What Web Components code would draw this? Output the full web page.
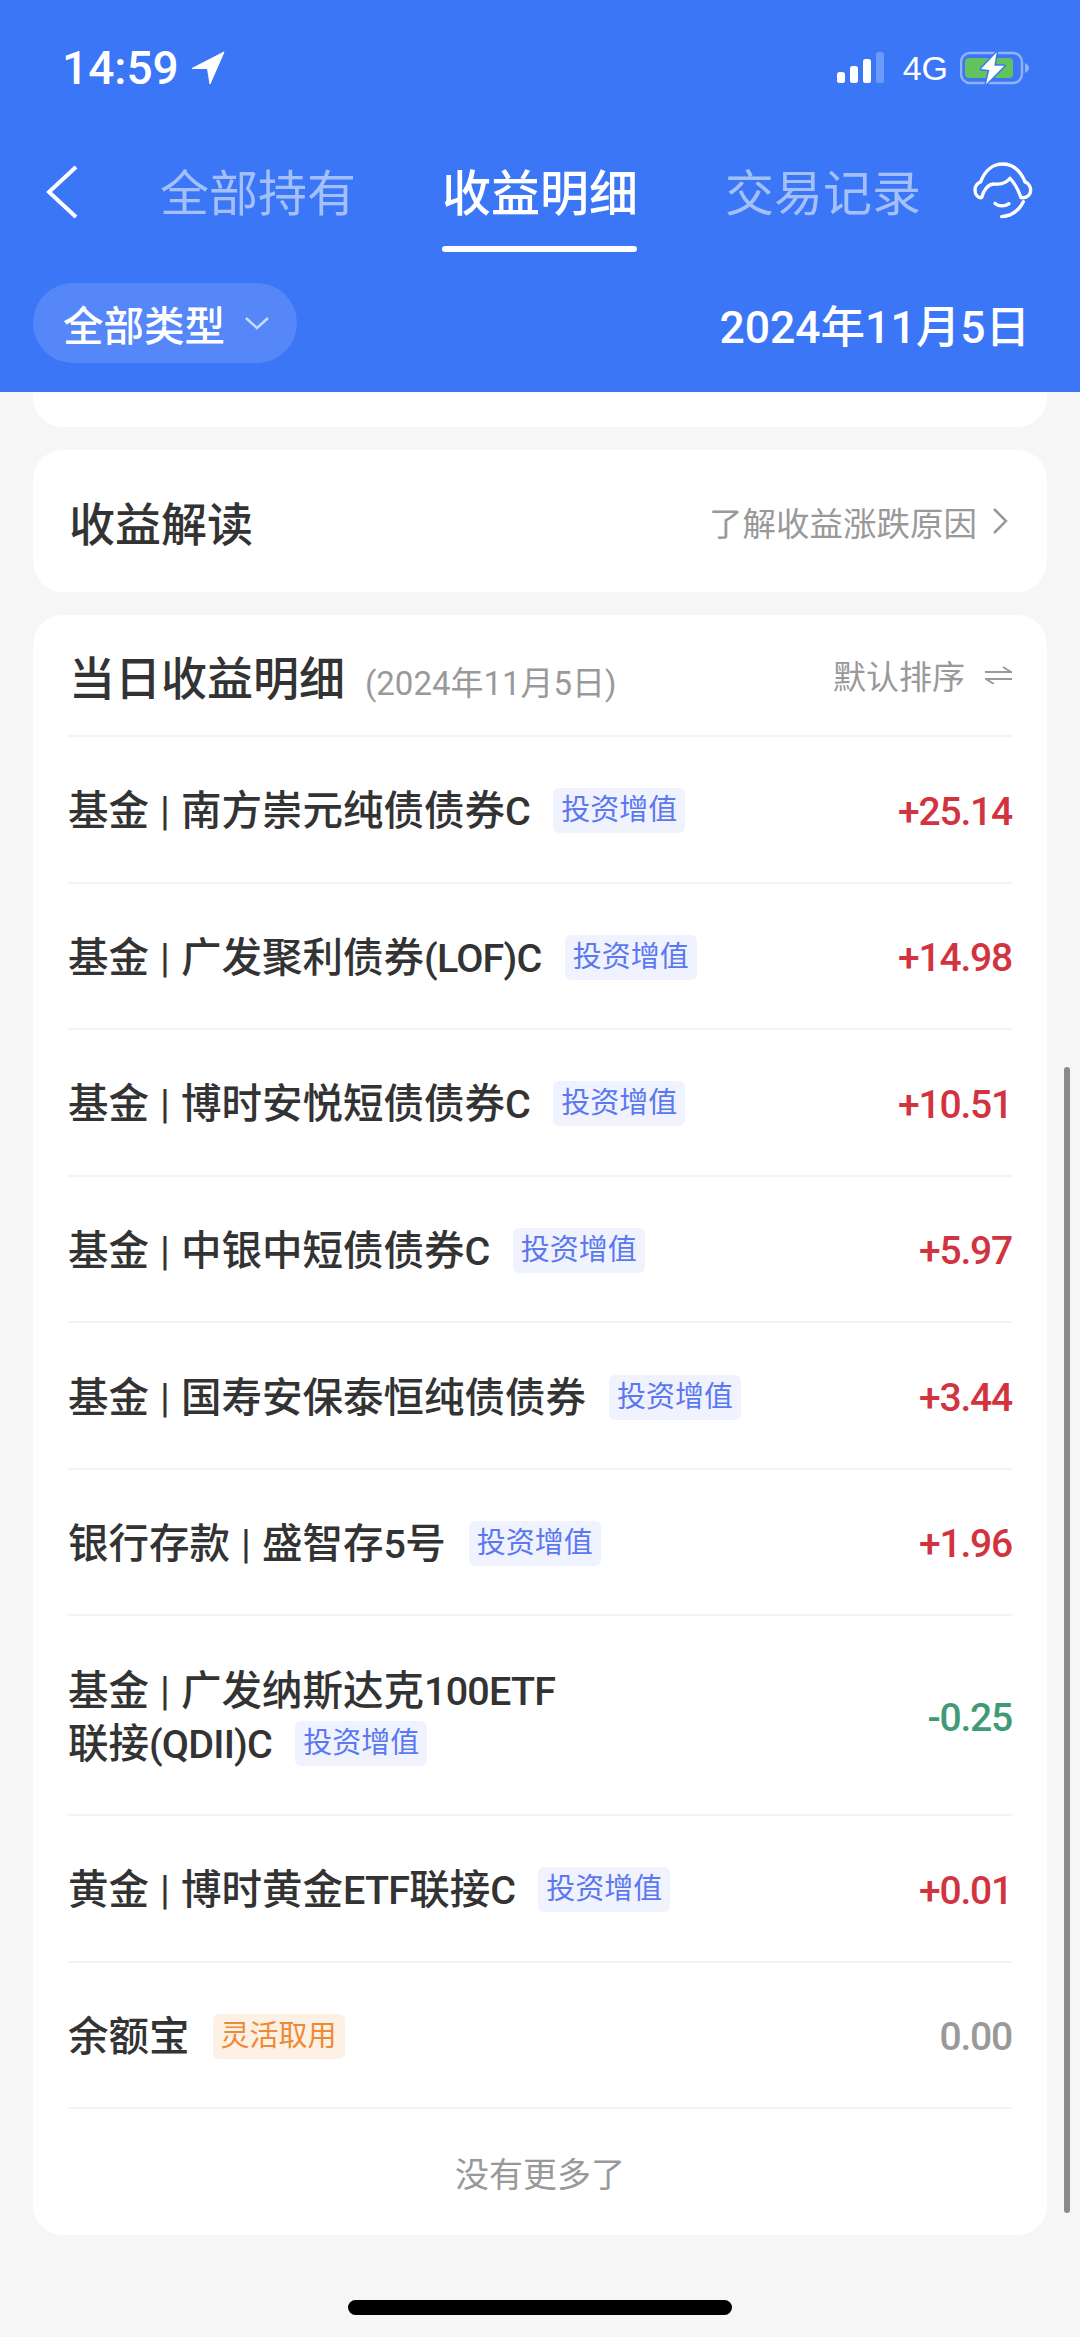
<!DOCTYPE html>
<html lang="zh">
<head>
<meta charset="utf-8">
<style>
  html, body { margin: 0; padding: 0; }
  body {
    width: 1080px;
    height: 2337px;
    overflow: hidden;
    background: #f6f6f6;
    font-family: Roboto, "Noto Sans CJK SC", sans-serif;
    position: relative;
  }
</style>
</head>
<body>
<app-header></app-header>
<stub-card></stub-card>
<insight-card></insight-card>
<detail-card>
  <income-row name="基金 | 南方崇元纯债债券C" amount="+25.14"></income-row>
  <income-row name="基金 | 广发聚利债券(LOF)C" amount="+14.98"></income-row>
  <income-row name="基金 | 博时安悦短债债券C" amount="+10.51"></income-row>
  <income-row name="基金 | 中银中短债债券C" amount="+5.97"></income-row>
  <income-row name="基金 | 国寿安保泰恒纯债债券" amount="+3.44"></income-row>
  <income-row name="银行存款 | 盛智存5号" amount="+1.96"></income-row>
  <income-row name="基金 | 广发纳斯达克100ETF 联接(QDII)C" amount="-0.25" tall></income-row>
  <income-row name="黄金 | 博时黄金ETF联接C" amount="+0.01"></income-row>
  <income-row name="余额宝" amount="0.00" tag="灵活取用" tone="orange"></income-row>
</detail-card>
<page-chrome></page-chrome>

<script>
(function () {
const CJK = 'Roboto, "Noto Sans CJK SC", sans-serif';

class AppHeader extends HTMLElement {
  constructor() {
    super();
    this.attachShadow({ mode: 'open' });
    this.shadowRoot.innerHTML = `
      <style>
        :host { display: block; height: 392px; background: #3b76f7; color: #fff; font-family: ${CJK}; }
        .status { height: 136px; display: flex; align-items: center; padding: 0 48px 0 62px; box-sizing: border-box; }
        .time { font: 500 46px/1 Roboto, sans-serif; }
        .loc { margin-left: 12px; }
        .spacer { flex: 1; }
        .net { font: 34px/1 "Liberation Sans", sans-serif; margin: 0 12px 0 19px; }
        .nav { height: 147px; display: grid; grid-template-columns: 160px 193px 89px 195px 88px 192px 1fr; align-items: start; }
        .back { padding: 29px 0 0 46px; }
        .tab { font-size: 49px; line-height: 48px; padding-top: 35px; color: #a4c0fb; white-space: nowrap; }
        .tab.on { color: #fff; font-weight: 500; position: relative; height: 116px; box-sizing: border-box; }
        .tab.on::after { content: ""; position: absolute; left: 0; right: 0; top: 110px; height: 6px; border-radius: 3px; background: #fff; }
        .help { padding: 19px 0 0 43px; }
        .filter { display: flex; align-items: center; justify-content: space-between; padding: 0 50px 0 33px; height: 80px; }
        .pill { width: 264px; height: 80px; border-radius: 40px; background: #5587f9; display: flex; align-items: center; box-sizing: border-box; padding-left: 30px; font-size: 40.500px; font-weight: 500; }
        .pill svg { margin-left: 19px; }
        .date { font-size: 44.500px; font-weight: 500; white-space: nowrap; }
      </style>
      <div class="status">
        <span class="time">14:59</span>
        <svg class="loc" width="34" height="34" viewBox="0 0 34 34"><path d="M33 1 1 17.500h15.500L19 33z" fill="#fff" stroke="#fff" stroke-width="1" stroke-linejoin="round"/></svg>
        <span class="spacer"></span>
        <svg width="48" height="32" viewBox="0 0 48 32">
          <rect x="1" y="20" width="8" height="11" rx="2.500" fill="#fff"/>
          <rect x="14" y="14" width="8" height="17" rx="2.500" fill="#fff"/>
          <rect x="27" y="7" width="8" height="24" rx="2.500" fill="#fff"/>
          <rect x="40" y="0" width="8" height="31" rx="2.500" fill="#6b9afa"/>
        </svg>
        <span class="net">4G</span>
        <svg width="72" height="38" viewBox="0 0 72 38">
          <rect x="1" y="4" width="61" height="30" rx="9" fill="none" stroke="#8fb2fb" stroke-width="2.500"/>
          <rect x="5" y="9" width="48" height="20" rx="4" fill="#62c35c"/>
          <path d="M65 14c2.500 1 4 3 4 5s-1.500 4-4 5z" fill="#8fb2fb"/>
          <path d="M36.700 3.300 21 20l8.300 1L26 35.300 44.300 16.700H34.300z" fill="#fff" stroke="#3b76f7" stroke-width="3" stroke-linejoin="round" paint-order="stroke"/>
        </svg>
      </div>
      <div class="nav">
        <svg class="back" width="32" height="54" viewBox="0 0 32 54" style="box-sizing:content-box"><path d="M30 2 3 27l27 25" fill="none" stroke="#fff" stroke-width="4"/></svg>
        <span class="tab">全部持有</span>
        <span></span>
        <span class="tab on">收益明细</span>
        <span></span>
        <span class="tab">交易记录</span>
        <svg class="help" width="85" height="70" viewBox="0 0 255 210" style="box-sizing:content-box">
          <g fill="none" stroke="#fff" stroke-width="10" stroke-linecap="round" stroke-linejoin="round">
            <path d="M62 80C75 45 100 27 128 27c32 0 52 18 67 53"/>
            <path d="M62 80C50 85 45 95 45 105c0 15 10 25 20 23 5-23 20-40 35-41 25 3 40-5 50-17 15 15 25 35 33 58 17 2 29-8 29-23 0-10-7-20-17-25"/>
            <path d="M105 145c10 10 30 10 42 1"/>
            <path d="M190 140c-15 30-35 43-65 45"/>
          </g>
        </svg>
      </div>
      <div class="filter">
        <div class="pill">全部类型
          <svg width="26" height="14" viewBox="0 0 26 14"><path d="M2 2l11 10L24 2" fill="none" stroke="#c9dafd" stroke-width="2.500"/></svg>
        </div>
        <span class="date">2024年11月5日</span>
      </div>
    `;
  }
}

class StubCard extends HTMLElement {
  constructor() {
    super();
    this.attachShadow({ mode: 'open' });
    this.shadowRoot.innerHTML = `
      <style>
        :host { display: block; height: 35px; margin: 0 33px; background: #fff; border-radius: 0 0 30px 30px; }
      </style>
    `;
  }
}

class InsightCard extends HTMLElement {
  constructor() {
    super();
    this.attachShadow({ mode: 'open' });
    this.shadowRoot.innerHTML = `
      <style>
        :host { display: flex; align-items: center; justify-content: space-between; height: 142px; margin: 23px 33px 0; padding: 0 39px 0 36px; box-sizing: border-box; background: #fff; border-radius: 30px; font-family: ${CJK}; }
        .title { font-size: 46px; font-weight: 500; color: #333; }
        .more { display: flex; align-items: center; font-size: 33.500px; color: #999; }
        .more svg { margin-left: 15px; }
      </style>
      <span class="title">收益解读</span>
      <span class="more">了解收益涨跌原因
        <svg width="16" height="28" viewBox="0 0 16 28"><path d="M2 2l12 12L2 26" fill="none" stroke="#999" stroke-width="2.500"/></svg>
      </span>
    `;
  }
}

class DetailCard extends HTMLElement {
  constructor() {
    super();
    this.attachShadow({ mode: 'open' });
    this.shadowRoot.innerHTML = `
      <style>
        :host { display: block; height: 1620px; margin: 23px 33px 0; padding: 0 35px; box-sizing: border-box; background: #fff; border-radius: 30px; font-family: ${CJK}; }
        .head { height: 122px; display: flex; align-items: center; justify-content: space-between; padding-left: 1px; border-bottom: 2px solid #f3f3f3; box-sizing: border-box; }
        .title { font-size: 46px; font-weight: 500; color: #333; }
        .date { font-size: 33px; color: #999; margin-left: 20px; }
        .sort { display: flex; align-items: center; font-size: 33px; color: #999; }
        .sort svg { margin-left: 20px; }
        .foot { text-align: center; font-size: 34px; line-height: 40px; color: #999; padding-top: 46px; }
      </style>
      <div class="head">
        <div><span class="title">当日收益明细</span><span class="date">(2024年11月5日)</span></div>
        <div class="sort">默认排序
          <svg width="27" height="18" viewBox="0 0 27 18"><path d="M0 6h26L18 1M27 13H1l8 5" fill="none" stroke="#999" stroke-width="2"/></svg>
        </div>
      </div>
      <slot></slot>
      <div class="foot">没有更多了</div>
    `;
  }
}

class IncomeRow extends HTMLElement {
  constructor() {
    super();
    this.attachShadow({ mode: 'open' });
  }

  connectedCallback() {
    const amount = this.getAttribute('amount') || '';
    const tone = this.getAttribute('tone') || 'blue';
    const tag = this.getAttribute('tag') || '投资增值';
    const tall = this.hasAttribute('tall');
    const colour = amount[0] === '+' ? '#d2343f' : amount[0] === '-' ? '#3f9a76' : '#999';
    // latin runs sit narrower than the CJK in the original
    const name = (this.getAttribute('name') || '')
      .replace(/[A-Za-z0-9()]+/g, '<span class="lat">$&</span>')
      .replace('|', '<span class="sep">|</span>');
    this.shadowRoot.innerHTML = `
      <style>
        :host { display: flex; align-items: center; justify-content: space-between; box-sizing: border-box; height: ${tall ? 200 : 146.500}px; border-bottom: 2px solid #f3f3f3; }
        .name { font-size: 40.500px; line-height: 52px; color: #333; font-weight: 500; width: ${tall ? 520 : 800}px; padding-top: 5px; }
        .lat { font-size: 39.500px; letter-spacing: -.8px; }
        .sep { font-weight: 400; margin: 0 1px; }
        .tag { display: inline-block; font-size: 29px; line-height: 45px; height: 45px; padding: 0 8px; margin-left: 13px; border-radius: 6px; vertical-align: middle; font-weight: 400; position: relative; top: ${tall ? -3 : -4}px; }
        .blue { background: #f0f3fe; color: #5b78f0; }
        .orange { background: #fdf0e4; color: #ee8a35; }
        .amount { font-size: 39px; font-weight: 500; color: ${colour}; letter-spacing: -1.200px; padding-top: 5px; }
      </style>
      <div class="name">${name} <span class="tag ${tone}">${tag}</span></div>
      <span class="amount">${amount}</span>
    `;
  }
}

class PageChrome extends HTMLElement {
  constructor() {
    super();
    this.attachShadow({ mode: 'open' });
    this.shadowRoot.innerHTML = `
      <style>
        .bar { position: absolute; left: 1064px; top: 1067px; width: 6px; height: 1146px; border-radius: 3px; background: #8b8b8b; }
        .home { position: absolute; left: 348px; top: 2300px; width: 384px; height: 15px; border-radius: 8px; background: #000; }
      </style>
      <div class="bar"></div>
      <div class="home"></div>
    `;
  }
}

customElements.define('app-header', AppHeader);
customElements.define('stub-card', StubCard);
customElements.define('insight-card', InsightCard);
customElements.define('detail-card', DetailCard);
customElements.define('income-row', IncomeRow);
customElements.define('page-chrome', PageChrome);
})();
</script>
</body>
</html>
